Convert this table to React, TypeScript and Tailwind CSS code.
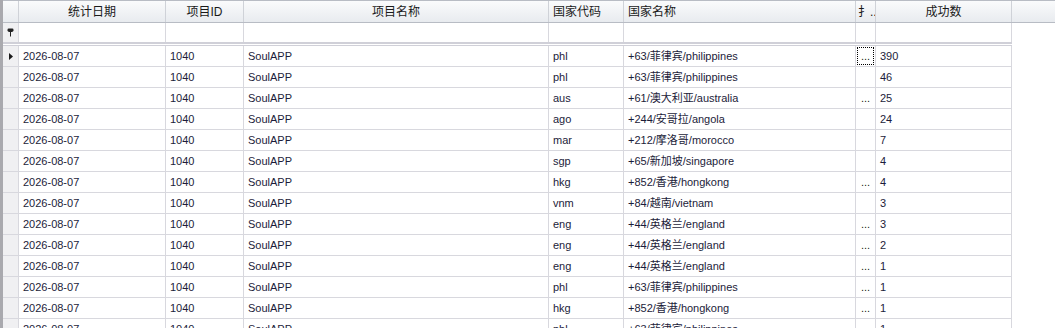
import React from 'react';

type Row = {
  date: string;
  id: string;
  name: string;
  code: string;
  country: string;
  dots: boolean;
  count: string;
};

const ROWS: Row[] = [
  { date: '2026-08-07', id: '1040', name: 'SoulAPP', code: 'phl', country: '+63/菲律宾/philippines', dots: true, count: '390' },
  { date: '2026-08-07', id: '1040', name: 'SoulAPP', code: 'phl', country: '+63/菲律宾/philippines', dots: false, count: '46' },
  { date: '2026-08-07', id: '1040', name: 'SoulAPP', code: 'aus', country: '+61/澳大利亚/australia', dots: true, count: '25' },
  { date: '2026-08-07', id: '1040', name: 'SoulAPP', code: 'ago', country: '+244/安哥拉/angola', dots: false, count: '24' },
  { date: '2026-08-07', id: '1040', name: 'SoulAPP', code: 'mar', country: '+212/摩洛哥/morocco', dots: false, count: '7' },
  { date: '2026-08-07', id: '1040', name: 'SoulAPP', code: 'sgp', country: '+65/新加坡/singapore', dots: false, count: '4' },
  { date: '2026-08-07', id: '1040', name: 'SoulAPP', code: 'hkg', country: '+852/香港/hongkong', dots: true, count: '4' },
  { date: '2026-08-07', id: '1040', name: 'SoulAPP', code: 'vnm', country: '+84/越南/vietnam', dots: false, count: '3' },
  { date: '2026-08-07', id: '1040', name: 'SoulAPP', code: 'eng', country: '+44/英格兰/england', dots: true, count: '3' },
  { date: '2026-08-07', id: '1040', name: 'SoulAPP', code: 'eng', country: '+44/英格兰/england', dots: true, count: '2' },
  { date: '2026-08-07', id: '1040', name: 'SoulAPP', code: 'eng', country: '+44/英格兰/england', dots: true, count: '1' },
  { date: '2026-08-07', id: '1040', name: 'SoulAPP', code: 'phl', country: '+63/菲律宾/philippines', dots: true, count: '1' },
  { date: '2026-08-07', id: '1040', name: 'SoulAPP', code: 'hkg', country: '+852/香港/hongkong', dots: true, count: '1' },
  { date: '2026-08-07', id: '1040', name: 'SoulAPP', code: 'phl', country: '+63/菲律宾/philippines', dots: true, count: '1' },
];

const COLS = 'grid-cols-[16px_147px_78px_305px_75px_232px_20px_136px]';
const cell = 'border-r border-b border-[#d8d8de] px-[4px] flex items-center overflow-hidden whitespace-nowrap';

function FilterPin() {
  return (
    <svg width="7" height="9" viewBox="0 0 7 9" aria-hidden="true">
      <rect x="0.5" y="0.5" width="6" height="3" rx="1.2" fill="#222" />
      <rect x="1.5" y="3" width="4" height="1" fill="#222" />
      <rect x="3" y="4" width="1" height="4.5" fill="#222" />
    </svg>
  );
}

function Arrow() {
  return (
    <svg width="4" height="7" viewBox="0 0 4 7" aria-hidden="true">
      <path d="M0 0 L4 3.5 L0 7 Z" fill="#1a1a1a" />
    </svg>
  );
}

export default function App() {
  return (
    <div
      className="w-[1055px] h-[328px] overflow-hidden bg-white flex text-[11px] text-[#1c1c3a]"
      style={{ fontFamily: '"Liberation Sans", "Noto Sans CJK SC", sans-serif' }}
    >
      <div className="w-[3px] shrink-0 bg-[#a9a9ae]" />
      <div className="flex-1 flex flex-col">
        {/* header */}
        <div className="flex h-[23px] shrink-0 border-t border-b border-[#b8bcc4] bg-gradient-to-b from-[#fafbfc] to-[#e8ebef] text-[12px] text-[#1a1a1a]">
          <div className={`grid ${COLS}`}>
            <div className="border-r border-[#cfd2d8]" />
            <div className="border-r border-[#cfd2d8] flex items-center justify-center">统计日期</div>
            <div className="border-r border-[#cfd2d8] flex items-center justify-center">项目ID</div>
            <div className="border-r border-[#cfd2d8] flex items-center justify-center">项目名称</div>
            <div className="border-r border-[#cfd2d8] flex items-center pl-[4px]">国家代码</div>
            <div className="border-r border-[#cfd2d8] flex items-center pl-[4px]">国家名称</div>
            <div className="border-r border-[#cfd2d8] flex items-center pl-[2px] overflow-hidden whitespace-nowrap">扌..</div>
            <div className="border-r border-[#cfd2d8] flex items-center justify-center">成功数</div>
          </div>
          <div className="flex-1" />
        </div>

        {/* filter row */}
        <div className="flex shrink-0">
          <div className={`grid ${COLS} h-[21px] border-b-2 border-[#d0d0d8]`}>
            <div className="border-r border-[#d8d8de] bg-[#f0f0f2] flex items-center justify-center">
              <FilterPin />
            </div>
            {Array.from({ length: 7 }).map((_, i) => (
              <div key={i} className="border-r border-[#d8d8de]" />
            ))}
          </div>
        </div>
        <div className="h-[1px] shrink-0" />

        {/* data */}
        <div className="flex">
          <div className={`grid ${COLS} auto-rows-[21px] border-t border-[#d0d0d8]`}>
            {ROWS.map((r, i) => (
              <React.Fragment key={i}>
                <div className="border-r border-b border-[#d8d8de] bg-[#f0f0f2] flex items-center justify-center">
                  {i === 0 && <Arrow />}
                </div>
                <div className={cell}>{r.date}</div>
                <div className={cell}>{r.id}</div>
                <div className={cell}>{r.name}</div>
                <div className={cell}>{r.code}</div>
                <div className={cell}>{r.country}</div>
                <div className="border-r border-b border-[#d8d8de] p-[1px] flex">
                  {r.dots && (
                    <div
                      className={`flex-1 flex items-center justify-center text-[#1a1a1a] ${
                        i === 0 ? 'border border-dotted border-black' : 'border border-transparent'
                      }`}
                    >
                      ...
                    </div>
                  )}
                </div>
                <div className={cell}>{r.count}</div>
              </React.Fragment>
            ))}
          </div>
        </div>
      </div>
    </div>
  );
}
